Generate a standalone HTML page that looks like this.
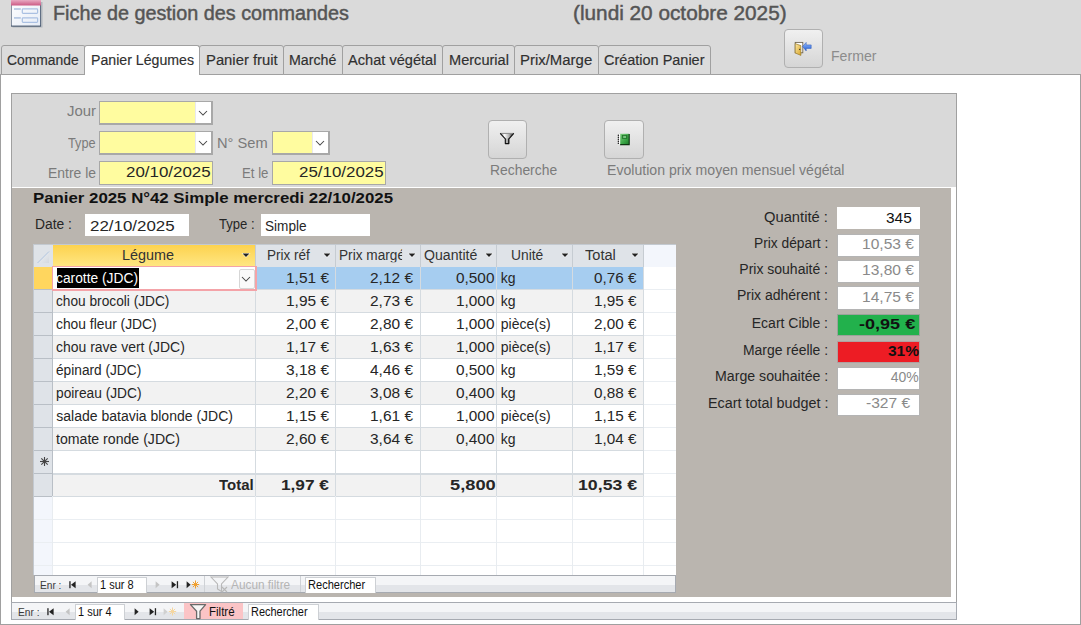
<!DOCTYPE html><html><head><meta charset="utf-8"><style>
html,body{margin:0;padding:0}
body{width:1081px;height:625px;position:relative;overflow:hidden;background:#dadada;font-family:"Liberation Sans",sans-serif}
div,span.t,svg{position:absolute}
span.t{white-space:pre}
</style></head><body>
<svg style="position:absolute;left:10px;top:0px" width="34" height="30" viewBox="0 0 34 30">
<defs><linearGradient id="pk" x1="0" y1="0" x2="0" y2="1"><stop offset="0" stop-color="#e8aac2"/><stop offset="1" stop-color="#cc5a84"/></linearGradient>
<linearGradient id="bd" x1="0" y1="0" x2="1" y2="1"><stop offset="0" stop-color="#ffffff"/><stop offset="1" stop-color="#e6ecf6"/></linearGradient></defs>
<rect x="2.5" y="2" width="30" height="25.5" fill="#8a94a0" opacity="0.5"/>
<rect x="1" y="0" width="30" height="26.6" fill="#3d4e66"/>
<rect x="1.6" y="0" width="28.6" height="25.6" fill="url(#bd)"/>
<rect x="1" y="0" width="30" height="5.5" fill="url(#pk)"/>
<rect x="4" y="8.1" width="6.8" height="1.8" fill="#b9cae4"/>
<rect x="12.3" y="8.9" width="15.3" height="4.5" rx="0.8" fill="none" stroke="#aac0e2" stroke-width="1.2"/>
<rect x="4" y="17" width="6.8" height="1.8" fill="#b9cae4"/>
<rect x="12.3" y="17.8" width="15.3" height="4.5" rx="0.8" fill="none" stroke="#aac0e2" stroke-width="1.2"/>
</svg>
<span class="t" style="left:53.30px;top:3.17px;font-size:20px;line-height:20px;transform:scaleX(0.9896);transform-origin:0 0;font-weight:normal;color:#555555;-webkit-text-stroke:0.45px #555;">Fiche de gestion des commandes</span>
<span class="t" style="left:572.90px;top:3.17px;font-size:20px;line-height:20px;transform:scaleX(1.0384);transform-origin:0 0;font-weight:normal;color:#555555;-webkit-text-stroke:0.45px #555;">(lundi 20 octobre 2025)</span>
<div style="left:0px;top:74px;width:1081px;height:551px;background:#fff;border:1px solid #a0a0a0;box-sizing:border-box"></div>
<div style="left:1px;top:45px;width:85px;height:30px;background:#dcdcdc;border:1px solid #a0a0a0;border-radius:3px 3px 0 0;box-sizing:border-box;z-index:1"></div>
<span class="t" style="left:6.70px;top:53.25px;font-size:14px;line-height:14px;transform:scaleX(0.9892);transform-origin:0 0;font-weight:normal;color:#303030;z-index:3;-webkit-text-stroke:0.15px #303030;">Commande</span>
<div style="left:84px;top:45px;width:116px;height:30px;background:#fff;border:1px solid #a0a0a0;border-bottom:none;border-radius:3px 3px 0 0;box-sizing:border-box;z-index:2"></div>
<span class="t" style="left:90.70px;top:53.25px;font-size:14px;line-height:14px;transform:scaleX(1.0099);transform-origin:0 0;font-weight:normal;color:#303030;z-index:3;-webkit-text-stroke:0.15px #303030;">Panier Légumes</span>
<div style="left:199px;top:45px;width:85px;height:30px;background:#dcdcdc;border:1px solid #a0a0a0;border-radius:3px 3px 0 0;box-sizing:border-box;z-index:1"></div>
<span class="t" style="left:206.00px;top:53.25px;font-size:14px;line-height:14px;transform:scaleX(1.0578);transform-origin:0 0;font-weight:normal;color:#303030;z-index:3;-webkit-text-stroke:0.15px #303030;">Panier fruit</span>
<div style="left:283px;top:45px;width:60px;height:30px;background:#dcdcdc;border:1px solid #a0a0a0;border-radius:3px 3px 0 0;box-sizing:border-box;z-index:1"></div>
<span class="t" style="left:289.30px;top:53.25px;font-size:14px;line-height:14px;transform:scaleX(1.0152);transform-origin:0 0;font-weight:normal;color:#303030;z-index:3;-webkit-text-stroke:0.15px #303030;">Marché</span>
<div style="left:342px;top:45px;width:101px;height:30px;background:#dcdcdc;border:1px solid #a0a0a0;border-radius:3px 3px 0 0;box-sizing:border-box;z-index:1"></div>
<span class="t" style="left:348.00px;top:53.25px;font-size:14px;line-height:14px;transform:scaleX(1.0431);transform-origin:0 0;font-weight:normal;color:#303030;z-index:3;-webkit-text-stroke:0.15px #303030;">Achat végétal</span>
<div style="left:442px;top:45px;width:73px;height:30px;background:#dcdcdc;border:1px solid #a0a0a0;border-radius:3px 3px 0 0;box-sizing:border-box;z-index:1"></div>
<span class="t" style="left:448.60px;top:53.25px;font-size:14px;line-height:14px;transform:scaleX(1.0410);transform-origin:0 0;font-weight:normal;color:#303030;z-index:3;-webkit-text-stroke:0.15px #303030;">Mercurial</span>
<div style="left:514px;top:45px;width:85px;height:30px;background:#dcdcdc;border:1px solid #a0a0a0;border-radius:3px 3px 0 0;box-sizing:border-box;z-index:1"></div>
<span class="t" style="left:520.20px;top:53.25px;font-size:14px;line-height:14px;transform:scaleX(1.0666);transform-origin:0 0;font-weight:normal;color:#303030;z-index:3;-webkit-text-stroke:0.15px #303030;">Prix/Marge</span>
<div style="left:598px;top:45px;width:113px;height:30px;background:#dcdcdc;border:1px solid #a0a0a0;border-radius:3px 3px 0 0;box-sizing:border-box;z-index:1"></div>
<span class="t" style="left:604.30px;top:53.25px;font-size:14px;line-height:14px;transform:scaleX(1.0329);transform-origin:0 0;font-weight:normal;color:#303030;z-index:3;-webkit-text-stroke:0.15px #303030;">Création Panier</span>
<div style="left:784px;top:29px;width:39px;height:39px;border:1px solid #b0b0b0;border-radius:4px;background:linear-gradient(#f0f0f0,#d5d5d5);box-sizing:border-box"></div>
<svg style="position:absolute;left:793px;top:40px" width="20" height="18" viewBox="0 0 20 18">
<defs><linearGradient id="dr" x1="0" y1="0" x2="1" y2="1"><stop offset="0" stop-color="#fde9a6"/><stop offset="1" stop-color="#d7a42a"/></linearGradient>
<linearGradient id="ar" x1="0" y1="0" x2="0" y2="1"><stop offset="0" stop-color="#9cc0ff"/><stop offset="1" stop-color="#1d5ad3"/></linearGradient></defs>
<rect x="2.2" y="2.4" width="7.6" height="10.4" fill="#fff" stroke="#6f6550" stroke-width="0.9"/>
<path d="M2.2 3.6 L7.9 5.6 L7.9 15.4 L2.2 13 Z" fill="url(#dr)" stroke="#8a6b1c" stroke-width="0.6"/>
<circle cx="6.7" cy="9.3" r="0.65" fill="#222"/>
<path d="M9.6 6.6 L13.2 2.4 L13.2 4.9 L18.2 4.9 L18.2 8.4 L13.2 8.4 L13.2 10.9 Z" fill="url(#ar)" stroke="#2856b8" stroke-width="0.5"/>
</svg>
<span class="t" style="left:831.30px;top:49.15px;font-size:14px;line-height:14px;transform:scaleX(1.0071);transform-origin:0 0;font-weight:normal;color:#8c8c8c;">Fermer</span>
<div style="left:11px;top:93px;width:946px;height:527px;border:1px solid #a0a0a0;border-bottom:none;background:#fff;box-sizing:border-box"></div>
<div style="left:12px;top:94px;width:944px;height:93px;background:#d9d9d9"></div>
<div style="left:12px;top:188px;width:939px;height:408.5px;background:#bab5af"></div>
<div style="left:99px;top:101px;width:114px;height:24px;background:#fffc9f;border:1px solid #a8a8a8;border-right-width:2px;border-bottom-width:2px;box-sizing:border-box"></div>
<div style="left:195px;top:102px;width:16px;height:21px;background:#fff;border-left:1px solid #e8e8f0;box-sizing:border-box"></div>
<svg style="position:absolute;left:198px;top:109.7px" width="10" height="6" viewBox="0 0 10 6"><path d="M1 1 L5 5 L9 1" fill="none" stroke="#444" stroke-width="1.05"/></svg>
<div style="left:99px;top:131px;width:114px;height:24px;background:#fffc9f;border:1px solid #a8a8a8;border-right-width:2px;border-bottom-width:2px;box-sizing:border-box"></div>
<div style="left:195px;top:132px;width:16px;height:21px;background:#fff;border-left:1px solid #e8e8f0;box-sizing:border-box"></div>
<svg style="position:absolute;left:198px;top:139.7px" width="10" height="6" viewBox="0 0 10 6"><path d="M1 1 L5 5 L9 1" fill="none" stroke="#444" stroke-width="1.05"/></svg>
<div style="left:272px;top:131px;width:58px;height:24px;background:#fffc9f;border:1px solid #a8a8a8;border-right-width:2px;border-bottom-width:2px;box-sizing:border-box"></div>
<div style="left:312px;top:132px;width:16px;height:21px;background:#fff;border-left:1px solid #e8e8f0;box-sizing:border-box"></div>
<svg style="position:absolute;left:315px;top:139.7px" width="10" height="6" viewBox="0 0 10 6"><path d="M1 1 L5 5 L9 1" fill="none" stroke="#444" stroke-width="1.05"/></svg>
<div style="left:99px;top:161px;width:114px;height:24px;background:#fffc9f;border:1px solid #a8a8a8;box-sizing:border-box"></div>
<div style="left:272px;top:161px;width:114px;height:24px;background:#fffc9f;border:1px solid #a8a8a8;box-sizing:border-box"></div>
<span class="t" style="left:66.90px;top:104.05px;font-size:14px;line-height:14px;transform:scaleX(1.0650);transform-origin:0 0;font-weight:normal;color:#7b7b7b;">Jour</span>
<span class="t" style="left:68.30px;top:135.85px;font-size:14px;line-height:14px;transform:scaleX(0.9085);transform-origin:0 0;font-weight:normal;color:#7b7b7b;">Type</span>
<span class="t" style="left:47.90px;top:165.85px;font-size:14px;line-height:14px;transform:scaleX(0.9952);transform-origin:0 0;font-weight:normal;color:#7b7b7b;">Entre le</span>
<span class="t" style="left:217.40px;top:135.85px;font-size:14px;line-height:14px;transform:scaleX(1.0461);transform-origin:0 0;font-weight:normal;color:#7b7b7b;">N° Sem</span>
<span class="t" style="left:241.60px;top:165.85px;font-size:14px;line-height:14px;transform:scaleX(0.9429);transform-origin:0 0;font-weight:normal;color:#7b7b7b;">Et le</span>
<span class="t" style="left:125.60px;top:165.15px;font-size:14px;line-height:14px;transform:scaleX(1.2074);transform-origin:0 0;font-weight:normal;color:#262626;">20/10/2025</span>
<span class="t" style="left:298.80px;top:165.15px;font-size:14px;line-height:14px;transform:scaleX(1.2074);transform-origin:0 0;font-weight:normal;color:#262626;">25/10/2025</span>
<div style="left:488px;top:120px;width:39px;height:39px;border:1px solid #b0b0b0;border-radius:4px;background:linear-gradient(#f0f0f0,#d5d5d5);box-sizing:border-box"></div>
<svg style="position:absolute;left:498px;top:131px" width="18" height="15" viewBox="0 0 18 15">
<defs><linearGradient id="fn" x1="0" y1="0" x2="1" y2="0"><stop offset="0" stop-color="#777"/><stop offset="0.3" stop-color="#fff"/><stop offset="0.65" stop-color="#b0b0b0"/><stop offset="1" stop-color="#222"/></linearGradient>
<linearGradient id="fs" x1="0" y1="0" x2="1" y2="0"><stop offset="0" stop-color="#555"/><stop offset="0.5" stop-color="#ddd"/><stop offset="1" stop-color="#000"/></linearGradient></defs>
<path d="M2.2 2.4 L15.8 2.4 L10.9 7.9 L7.3 7.9 Z" fill="url(#fn)"/>
<path d="M7.3 7.6 H10.9 V12.6 H7.3 Z" fill="url(#fs)"/>
<path d="M2.2 2.4 H15.8" stroke="#8a8a8a" stroke-width="1"/>
<path d="M2.2 2.4 L7.3 7.9 V12.6 H10.9 V7.9 L15.8 2.4" fill="none" stroke="#111" stroke-width="1.1" stroke-linejoin="round"/>
</svg>
<span class="t" style="left:489.50px;top:162.85px;font-size:14px;line-height:14px;transform:scaleX(0.9913);transform-origin:0 0;font-weight:normal;color:#7b7b7b;">Recherche</span>
<div style="left:604px;top:120px;width:40px;height:39px;border:1px solid #b0b0b0;border-radius:4px;background:linear-gradient(#f0f0f0,#d5d5d5);box-sizing:border-box"></div>
<svg style="position:absolute;left:616px;top:132px" width="15" height="14" viewBox="0 0 15 14">
<defs><linearGradient id="nb" x1="0" y1="0" x2="1" y2="1"><stop offset="0" stop-color="#7fd07f"/><stop offset="0.6" stop-color="#3aa545"/><stop offset="1" stop-color="#1c7a28"/></linearGradient></defs>
<rect x="3.6" y="1.8" width="9.6" height="10.8" fill="url(#nb)"/>
<path d="M13.2 2 V12.6 H4" fill="none" stroke="#0f3512" stroke-width="1.1"/>
<rect x="6.2" y="3.6" width="4.8" height="2.8" fill="#2a8f35" stroke="#1c6a24" stroke-width="0.6"/>
<rect x="7.2" y="4.5" width="2.8" height="1" fill="#c8f0c8"/>
<rect x="2.6" y="2" width="1.6" height="10.6" fill="#fff"/>
<g fill="#111"><circle cx="2.4" cy="3.2" r="0.75"/><circle cx="2.4" cy="5.2" r="0.75"/><circle cx="2.4" cy="7.2" r="0.75"/><circle cx="2.4" cy="9.2" r="0.75"/><circle cx="2.4" cy="11.2" r="0.75"/></g>
</svg>
<span class="t" style="left:606.50px;top:162.85px;font-size:14px;line-height:14px;transform:scaleX(1.0071);transform-origin:0 0;font-weight:normal;color:#7b7b7b;">Evolution prix moyen mensuel végétal</span>
<span class="t" style="left:33.00px;top:191.05px;font-size:14px;line-height:14px;transform:scaleX(1.2008);transform-origin:0 0;font-weight:bold;color:#111;">Panier 2025 N°42 Simple mercredi 22/10/2025</span>
<span class="t" style="left:34.90px;top:217.45px;font-size:14px;line-height:14px;transform:scaleX(0.9898);transform-origin:0 0;font-weight:normal;color:#262626;">Date :</span>
<div style="left:85px;top:214px;width:104px;height:22px;background:#fff"></div>
<span class="t" style="left:89.70px;top:218.85px;font-size:14px;line-height:14px;transform:scaleX(1.2088);transform-origin:0 0;font-weight:normal;color:#262626;">22/10/2025</span>
<span class="t" style="left:219.40px;top:217.45px;font-size:14px;line-height:14px;transform:scaleX(0.9332);transform-origin:0 0;font-weight:normal;color:#262626;">Type :</span>
<div style="left:261px;top:214px;width:109px;height:22px;background:#fff"></div>
<span class="t" style="left:265.00px;top:218.65px;font-size:14px;line-height:14px;transform:scaleX(0.9703);transform-origin:0 0;font-weight:normal;color:#262626;">Simple</span>
<div style="left:837px;top:207px;width:83px;height:22px;background:#fff;box-sizing:border-box"></div>
<span class="t" style="left:764.10px;top:209.95px;font-size:14px;line-height:14px;transform:scaleX(1.0529);transform-origin:0 0;font-weight:normal;color:#262626;">Quantité :</span>
<span class="t" style="left:885.50px;top:211.05px;font-size:14px;line-height:14px;transform:scaleX(1.1035);transform-origin:0 0;font-weight:normal;color:#111;">345</span>
<div style="left:837px;top:234px;width:83px;height:23px;background:#fff;border:1px solid #b4b4b4;box-sizing:border-box"></div>
<span class="t" style="left:753.80px;top:235.85px;font-size:14px;line-height:14px;transform:scaleX(0.9833);transform-origin:0 0;font-weight:normal;color:#262626;">Prix départ :</span>
<span class="t" style="left:861.70px;top:236.55px;font-size:14px;line-height:14px;transform:scaleX(1.1116);transform-origin:0 0;font-weight:normal;color:#8a8a8a;">10,53 €</span>
<div style="left:837px;top:260px;width:83px;height:23px;background:#fff;border:1px solid #b4b4b4;box-sizing:border-box"></div>
<span class="t" style="left:739.31px;top:261.85px;font-size:14px;line-height:14px;font-weight:normal;color:#262626;">Prix souhaité :</span>
<span class="t" style="left:861.70px;top:262.95px;font-size:14px;line-height:14px;transform:scaleX(1.1116);transform-origin:0 0;font-weight:normal;color:#8a8a8a;">13,80 €</span>
<div style="left:837px;top:286px;width:83px;height:24px;background:#fff;border:1px solid #b4b4b4;box-sizing:border-box"></div>
<span class="t" style="left:736.93px;top:287.85px;font-size:14px;line-height:14px;font-weight:normal;color:#262626;">Prix adhérent :</span>
<span class="t" style="left:861.70px;top:289.95px;font-size:14px;line-height:14px;transform:scaleX(1.1116);transform-origin:0 0;font-weight:normal;color:#8a8a8a;">14,75 €</span>
<div style="left:837px;top:314px;width:83px;height:22px;background:#22b14c;border:1px solid #9aa39a;box-sizing:border-box"></div>
<span class="t" style="left:751.77px;top:315.95px;font-size:14px;line-height:14px;font-weight:normal;color:#262626;">Ecart Cible :</span>
<span class="t" style="left:858.50px;top:316.75px;font-size:14px;line-height:14px;transform:scaleX(1.2887);transform-origin:0 0;font-weight:bold;color:#111;">-0,95 €</span>
<div style="left:837px;top:341px;width:83px;height:22px;background:#ed1c24;border:1px solid #b0a0a0;box-sizing:border-box"></div>
<span class="t" style="left:742.90px;top:343.15px;font-size:14px;line-height:14px;transform:scaleX(0.9940);transform-origin:0 0;font-weight:normal;color:#262626;">Marge réelle :</span>
<span class="t" style="left:888.00px;top:343.75px;font-size:14px;line-height:14px;transform:scaleX(1.1071);transform-origin:0 0;font-weight:bold;color:#111;">31%</span>
<div style="left:837px;top:367px;width:83px;height:23px;background:#fff;border:1px solid #b4b4b4;box-sizing:border-box"></div>
<span class="t" style="left:714.70px;top:368.75px;font-size:14px;line-height:14px;transform:scaleX(1.0110);transform-origin:0 0;font-weight:normal;color:#262626;">Marge souhaitée :</span>
<span class="t" style="left:890.80px;top:369.55px;font-size:14px;line-height:14px;font-weight:normal;color:#8a8a8a;">40%</span>
<div style="left:837px;top:394px;width:83px;height:22px;background:#fff;border:1px solid #b4b4b4;box-sizing:border-box"></div>
<span class="t" style="left:707.50px;top:395.95px;font-size:14px;line-height:14px;transform:scaleX(1.0253);transform-origin:0 0;font-weight:normal;color:#262626;">Ecart total budget :</span>
<span class="t" style="left:865.90px;top:396.25px;font-size:14px;line-height:14px;transform:scaleX(1.1136);transform-origin:0 0;font-weight:normal;color:#8a8a8a;">-327 €</span>
<div style="left:34px;top:245px;width:642px;height:330px;background:#fff"></div>
<div style="left:34px;top:245px;width:642px;height:22px;background:#f3f6fc"></div>
<div style="left:34px;top:245px;width:610px;height:22px;background:#dfe3e8"></div>
<div style="left:53px;top:245px;width:202px;height:22px;background:linear-gradient(#fdd24e,#ffe784)"></div>
<div style="left:34px;top:267px;width:19px;height:308px;background:#f3f6fc"></div>
<div style="left:53px;top:267px;width:591px;height:22px;background:#a6cdf0"></div>
<div style="left:34px;top:267px;width:18px;height:22px;background:#ffd65e"></div>
<div style="left:53px;top:289px;width:591px;height:1px;background:#d5dbe0"></div>
<div style="left:34px;top:289px;width:19px;height:1px;background:#b9bfc6"></div>
<div style="left:644px;top:289px;width:32px;height:1px;background:#eaeef2"></div>
<div style="left:53px;top:290px;width:591px;height:22px;background:#f2f2f2"></div>
<div style="left:34px;top:290px;width:18px;height:22px;background:#dfe3e8"></div>
<div style="left:53px;top:312px;width:591px;height:1px;background:#d5dbe0"></div>
<div style="left:34px;top:312px;width:19px;height:1px;background:#b9bfc6"></div>
<div style="left:644px;top:312px;width:32px;height:1px;background:#eaeef2"></div>
<div style="left:53px;top:313px;width:591px;height:22px;background:#ffffff"></div>
<div style="left:34px;top:313px;width:18px;height:22px;background:#dfe3e8"></div>
<div style="left:53px;top:335px;width:591px;height:1px;background:#d5dbe0"></div>
<div style="left:34px;top:335px;width:19px;height:1px;background:#b9bfc6"></div>
<div style="left:644px;top:335px;width:32px;height:1px;background:#eaeef2"></div>
<div style="left:53px;top:336px;width:591px;height:22px;background:#f2f2f2"></div>
<div style="left:34px;top:336px;width:18px;height:22px;background:#dfe3e8"></div>
<div style="left:53px;top:358px;width:591px;height:1px;background:#d5dbe0"></div>
<div style="left:34px;top:358px;width:19px;height:1px;background:#b9bfc6"></div>
<div style="left:644px;top:358px;width:32px;height:1px;background:#eaeef2"></div>
<div style="left:53px;top:359px;width:591px;height:22px;background:#ffffff"></div>
<div style="left:34px;top:359px;width:18px;height:22px;background:#dfe3e8"></div>
<div style="left:53px;top:381px;width:591px;height:1px;background:#d5dbe0"></div>
<div style="left:34px;top:381px;width:19px;height:1px;background:#b9bfc6"></div>
<div style="left:644px;top:381px;width:32px;height:1px;background:#eaeef2"></div>
<div style="left:53px;top:382px;width:591px;height:22px;background:#f2f2f2"></div>
<div style="left:34px;top:382px;width:18px;height:22px;background:#dfe3e8"></div>
<div style="left:53px;top:404px;width:591px;height:1px;background:#d5dbe0"></div>
<div style="left:34px;top:404px;width:19px;height:1px;background:#b9bfc6"></div>
<div style="left:644px;top:404px;width:32px;height:1px;background:#eaeef2"></div>
<div style="left:53px;top:405px;width:591px;height:22px;background:#ffffff"></div>
<div style="left:34px;top:405px;width:18px;height:22px;background:#dfe3e8"></div>
<div style="left:53px;top:427px;width:591px;height:1px;background:#d5dbe0"></div>
<div style="left:34px;top:427px;width:19px;height:1px;background:#b9bfc6"></div>
<div style="left:644px;top:427px;width:32px;height:1px;background:#eaeef2"></div>
<div style="left:53px;top:428px;width:591px;height:22px;background:#f2f2f2"></div>
<div style="left:34px;top:428px;width:18px;height:22px;background:#dfe3e8"></div>
<div style="left:53px;top:450px;width:591px;height:1px;background:#d5dbe0"></div>
<div style="left:34px;top:450px;width:19px;height:1px;background:#b9bfc6"></div>
<div style="left:644px;top:450px;width:32px;height:1px;background:#eaeef2"></div>
<div style="left:53px;top:451px;width:591px;height:22px;background:#ffffff"></div>
<div style="left:34px;top:451px;width:18px;height:22px;background:#dfe3e8"></div>
<div style="left:53px;top:473px;width:591px;height:1px;background:#d5dbe0"></div>
<div style="left:34px;top:473px;width:19px;height:1px;background:#b9bfc6"></div>
<div style="left:644px;top:473px;width:32px;height:1px;background:#eaeef2"></div>
<div style="left:53px;top:474px;width:591px;height:22px;background:#f2f2f2"></div>
<div style="left:34px;top:474px;width:18px;height:22px;background:#dfe3e8"></div>
<div style="left:53px;top:496px;width:591px;height:1px;background:#d5dbe0"></div>
<div style="left:34px;top:496px;width:19px;height:1px;background:#b9bfc6"></div>
<div style="left:644px;top:496px;width:32px;height:1px;background:#eaeef2"></div>
<div style="left:53px;top:474px;width:591px;height:1px;background:#d5dbe0"></div>
<div style="left:34px;top:519px;width:642px;height:1px;background:#eaeef2"></div>
<div style="left:34px;top:542px;width:642px;height:1px;background:#eaeef2"></div>
<div style="left:34px;top:565px;width:642px;height:1px;background:#eaeef2"></div>
<div style="left:52px;top:267px;width:1px;height:229px;background:#b9bfc6"></div>
<div style="left:52px;top:496px;width:1px;height:79px;background:#e8ecf0"></div>
<div style="left:255px;top:245px;width:1px;height:251px;background:#d5dbe0"></div>
<div style="left:255px;top:496px;width:1px;height:79px;background:#e8ecf0"></div>
<div style="left:335px;top:245px;width:1px;height:251px;background:#d5dbe0"></div>
<div style="left:335px;top:496px;width:1px;height:79px;background:#e8ecf0"></div>
<div style="left:420px;top:245px;width:1px;height:251px;background:#d5dbe0"></div>
<div style="left:420px;top:496px;width:1px;height:79px;background:#e8ecf0"></div>
<div style="left:496px;top:245px;width:1px;height:251px;background:#d5dbe0"></div>
<div style="left:496px;top:496px;width:1px;height:79px;background:#e8ecf0"></div>
<div style="left:572px;top:245px;width:1px;height:251px;background:#d5dbe0"></div>
<div style="left:572px;top:496px;width:1px;height:79px;background:#e8ecf0"></div>
<div style="left:643px;top:245px;width:1px;height:251px;background:#d5dbe0"></div>
<div style="left:643px;top:496px;width:1px;height:79px;background:#e8ecf0"></div>
<div style="left:255px;top:245px;width:1px;height:22px;background:#c6ccd2"></div>
<div style="left:335px;top:245px;width:1px;height:22px;background:#c6ccd2"></div>
<div style="left:420px;top:245px;width:1px;height:22px;background:#c6ccd2"></div>
<div style="left:496px;top:245px;width:1px;height:22px;background:#c6ccd2"></div>
<div style="left:572px;top:245px;width:1px;height:22px;background:#c6ccd2"></div>
<div style="left:643px;top:245px;width:1px;height:22px;background:#c6ccd2"></div>
<div style="left:52px;top:266px;width:205px;height:25px;background:#fff;border:1px solid #f4a3a8;border-right-width:2px;border-bottom-width:2px;box-sizing:border-box"></div>
<div style="left:57px;top:268px;width:82px;height:20px;background:#000"></div>
<div style="left:238.5px;top:268.5px;width:16px;height:20px;background:#fafafa;border:1px solid #d6d6d6;border-radius:2px;box-sizing:border-box"></div>
<svg style="position:absolute;left:241.3px;top:276px" width="10" height="6" viewBox="0 0 10 6"><path d="M1 1 L5 5 L9 1" fill="none" stroke="#444" stroke-width="1.05"/></svg>
<span class="t" style="left:121.60px;top:248.35px;font-size:14px;line-height:14px;transform:scaleX(1.0275);transform-origin:0 0;font-weight:normal;color:#333;">Légume</span>
<svg style="position:absolute;left:240.5px;top:251.5px" width="10" height="7" viewBox="0 0 10 7"><path d="M0.5 1 L9.5 1 L5 5.8 Z" fill="#fff" opacity="0.8"/><path d="M1.6 1.5 L8.4 1.5 L5 5 Z" fill="#222"/></svg>
<span class="t" style="left:266.50px;top:248.35px;font-size:14px;line-height:14px;transform:scaleX(0.9667);transform-origin:0 0;font-weight:normal;color:#333;">Prix réf</span>
<svg style="position:absolute;left:322.1px;top:251.5px" width="10" height="7" viewBox="0 0 10 7"><path d="M0.5 1 L9.5 1 L5 5.8 Z" fill="#fff" opacity="0.8"/><path d="M1.6 1.5 L8.4 1.5 L5 5 Z" fill="#222"/></svg>
<span class="t" style="left:339.40px;top:248.35px;font-size:14px;line-height:14px;transform:scaleX(0.9750);transform-origin:0 0;font-weight:normal;color:#333;clip-path:inset(0 3px 0 0);">Prix margé</span>
<svg style="position:absolute;left:407.2px;top:251.5px" width="10" height="7" viewBox="0 0 10 7"><path d="M0.5 1 L9.5 1 L5 5.8 Z" fill="#fff" opacity="0.8"/><path d="M1.6 1.5 L8.4 1.5 L5 5 Z" fill="#222"/></svg>
<span class="t" style="left:423.80px;top:248.35px;font-size:14px;line-height:14px;transform:scaleX(1.0072);transform-origin:0 0;font-weight:normal;color:#333;">Quantité</span>
<svg style="position:absolute;left:483.5px;top:251.5px" width="10" height="7" viewBox="0 0 10 7"><path d="M0.5 1 L9.5 1 L5 5.8 Z" fill="#fff" opacity="0.8"/><path d="M1.6 1.5 L8.4 1.5 L5 5 Z" fill="#222"/></svg>
<span class="t" style="left:511.10px;top:248.35px;font-size:14px;line-height:14px;transform:scaleX(0.9881);transform-origin:0 0;font-weight:normal;color:#333;">Unité</span>
<svg style="position:absolute;left:559.7px;top:251.5px" width="10" height="7" viewBox="0 0 10 7"><path d="M0.5 1 L9.5 1 L5 5.8 Z" fill="#fff" opacity="0.8"/><path d="M1.6 1.5 L8.4 1.5 L5 5 Z" fill="#222"/></svg>
<span class="t" style="left:585.20px;top:248.35px;font-size:14px;line-height:14px;transform:scaleX(1.0427);transform-origin:0 0;font-weight:normal;color:#333;">Total</span>
<svg style="position:absolute;left:630.1px;top:251.5px" width="10" height="7" viewBox="0 0 10 7"><path d="M0.5 1 L9.5 1 L5 5.8 Z" fill="#fff" opacity="0.8"/><path d="M1.6 1.5 L8.4 1.5 L5 5 Z" fill="#222"/></svg>
<svg style="position:absolute;left:37px;top:251px" width="13" height="13" viewBox="0 0 13 13"><defs><linearGradient id="sa" x1="0" y1="0" x2="1" y2="1"><stop offset="0" stop-color="#f4f6f9"/><stop offset="1" stop-color="#d3d8de"/></linearGradient></defs><path d="M0.5 12 L12 0.5 L12 12 Z" fill="url(#sa)"/><path d="M0.5 12 L12 0.5" stroke="#a9bfdc" stroke-width="0.9"/></svg>
<span class="t" style="left:56.30px;top:270.95px;font-size:14px;line-height:14px;transform:scaleX(0.9852);transform-origin:0 0;font-weight:normal;color:#fff;">carotte (JDC)</span>
<span class="t" style="left:285.70px;top:270.95px;font-size:14px;line-height:14px;transform:scaleX(1.1048);transform-origin:0 0;font-weight:normal;color:#262626;">1,51 €</span>
<span class="t" style="left:370.00px;top:270.95px;font-size:14px;line-height:14px;transform:scaleX(1.1048);transform-origin:0 0;font-weight:normal;color:#262626;">2,12 €</span>
<span class="t" style="left:455.50px;top:270.95px;font-size:14px;line-height:14px;transform:scaleX(1.0978);transform-origin:0 0;font-weight:normal;color:#262626;">0,500</span>
<span class="t" style="left:500.80px;top:270.95px;font-size:14px;line-height:14px;font-weight:normal;color:#262626;">kg</span>
<span class="t" style="left:593.70px;top:270.95px;font-size:14px;line-height:14px;transform:scaleX(1.0894);transform-origin:0 0;font-weight:normal;color:#262626;">0,76 €</span>
<span class="t" style="left:56.30px;top:293.95px;font-size:14px;line-height:14px;transform:scaleX(0.9783);transform-origin:0 0;font-weight:normal;color:#262626;">chou brocoli (JDC)</span>
<span class="t" style="left:285.70px;top:293.95px;font-size:14px;line-height:14px;transform:scaleX(1.1048);transform-origin:0 0;font-weight:normal;color:#262626;">1,95 €</span>
<span class="t" style="left:370.00px;top:293.95px;font-size:14px;line-height:14px;transform:scaleX(1.1048);transform-origin:0 0;font-weight:normal;color:#262626;">2,73 €</span>
<span class="t" style="left:455.50px;top:293.95px;font-size:14px;line-height:14px;transform:scaleX(1.0978);transform-origin:0 0;font-weight:normal;color:#262626;">1,000</span>
<span class="t" style="left:500.80px;top:293.95px;font-size:14px;line-height:14px;font-weight:normal;color:#262626;">kg</span>
<span class="t" style="left:593.70px;top:293.95px;font-size:14px;line-height:14px;transform:scaleX(1.0894);transform-origin:0 0;font-weight:normal;color:#262626;">1,95 €</span>
<span class="t" style="left:56.30px;top:316.95px;font-size:14px;line-height:14px;transform:scaleX(0.9880);transform-origin:0 0;font-weight:normal;color:#262626;">chou fleur (JDC)</span>
<span class="t" style="left:285.70px;top:316.95px;font-size:14px;line-height:14px;transform:scaleX(1.1048);transform-origin:0 0;font-weight:normal;color:#262626;">2,00 €</span>
<span class="t" style="left:370.00px;top:316.95px;font-size:14px;line-height:14px;transform:scaleX(1.1048);transform-origin:0 0;font-weight:normal;color:#262626;">2,80 €</span>
<span class="t" style="left:455.50px;top:316.95px;font-size:14px;line-height:14px;transform:scaleX(1.0978);transform-origin:0 0;font-weight:normal;color:#262626;">1,000</span>
<span class="t" style="left:500.80px;top:316.95px;font-size:14px;line-height:14px;font-weight:normal;color:#262626;">pièce(s)</span>
<span class="t" style="left:593.70px;top:316.95px;font-size:14px;line-height:14px;transform:scaleX(1.0894);transform-origin:0 0;font-weight:normal;color:#262626;">2,00 €</span>
<span class="t" style="left:56.30px;top:339.95px;font-size:14px;line-height:14px;transform:scaleX(0.9973);transform-origin:0 0;font-weight:normal;color:#262626;">chou rave vert (JDC)</span>
<span class="t" style="left:285.70px;top:339.95px;font-size:14px;line-height:14px;transform:scaleX(1.1048);transform-origin:0 0;font-weight:normal;color:#262626;">1,17 €</span>
<span class="t" style="left:370.00px;top:339.95px;font-size:14px;line-height:14px;transform:scaleX(1.1048);transform-origin:0 0;font-weight:normal;color:#262626;">1,63 €</span>
<span class="t" style="left:455.50px;top:339.95px;font-size:14px;line-height:14px;transform:scaleX(1.0978);transform-origin:0 0;font-weight:normal;color:#262626;">1,000</span>
<span class="t" style="left:500.80px;top:339.95px;font-size:14px;line-height:14px;font-weight:normal;color:#262626;">pièce(s)</span>
<span class="t" style="left:593.70px;top:339.95px;font-size:14px;line-height:14px;transform:scaleX(1.0894);transform-origin:0 0;font-weight:normal;color:#262626;">1,17 €</span>
<span class="t" style="left:56.30px;top:362.95px;font-size:14px;line-height:14px;transform:scaleX(0.9776);transform-origin:0 0;font-weight:normal;color:#262626;">épinard (JDC)</span>
<span class="t" style="left:285.70px;top:362.95px;font-size:14px;line-height:14px;transform:scaleX(1.1048);transform-origin:0 0;font-weight:normal;color:#262626;">3,18 €</span>
<span class="t" style="left:370.00px;top:362.95px;font-size:14px;line-height:14px;transform:scaleX(1.1048);transform-origin:0 0;font-weight:normal;color:#262626;">4,46 €</span>
<span class="t" style="left:455.50px;top:362.95px;font-size:14px;line-height:14px;transform:scaleX(1.0978);transform-origin:0 0;font-weight:normal;color:#262626;">0,500</span>
<span class="t" style="left:500.80px;top:362.95px;font-size:14px;line-height:14px;font-weight:normal;color:#262626;">kg</span>
<span class="t" style="left:593.70px;top:362.95px;font-size:14px;line-height:14px;transform:scaleX(1.0894);transform-origin:0 0;font-weight:normal;color:#262626;">1,59 €</span>
<span class="t" style="left:56.30px;top:385.95px;font-size:14px;line-height:14px;transform:scaleX(0.9811);transform-origin:0 0;font-weight:normal;color:#262626;">poireau (JDC)</span>
<span class="t" style="left:285.70px;top:385.95px;font-size:14px;line-height:14px;transform:scaleX(1.1048);transform-origin:0 0;font-weight:normal;color:#262626;">2,20 €</span>
<span class="t" style="left:370.00px;top:385.95px;font-size:14px;line-height:14px;transform:scaleX(1.1048);transform-origin:0 0;font-weight:normal;color:#262626;">3,08 €</span>
<span class="t" style="left:455.50px;top:385.95px;font-size:14px;line-height:14px;transform:scaleX(1.0978);transform-origin:0 0;font-weight:normal;color:#262626;">0,400</span>
<span class="t" style="left:500.80px;top:385.95px;font-size:14px;line-height:14px;font-weight:normal;color:#262626;">kg</span>
<span class="t" style="left:593.70px;top:385.95px;font-size:14px;line-height:14px;transform:scaleX(1.0894);transform-origin:0 0;font-weight:normal;color:#262626;">0,88 €</span>
<span class="t" style="left:56.30px;top:408.95px;font-size:14px;line-height:14px;font-weight:normal;color:#262626;">salade batavia blonde (JDC)</span>
<span class="t" style="left:285.70px;top:408.95px;font-size:14px;line-height:14px;transform:scaleX(1.1048);transform-origin:0 0;font-weight:normal;color:#262626;">1,15 €</span>
<span class="t" style="left:370.00px;top:408.95px;font-size:14px;line-height:14px;transform:scaleX(1.1048);transform-origin:0 0;font-weight:normal;color:#262626;">1,61 €</span>
<span class="t" style="left:455.50px;top:408.95px;font-size:14px;line-height:14px;transform:scaleX(1.0978);transform-origin:0 0;font-weight:normal;color:#262626;">1,000</span>
<span class="t" style="left:500.80px;top:408.95px;font-size:14px;line-height:14px;font-weight:normal;color:#262626;">pièce(s)</span>
<span class="t" style="left:593.70px;top:408.95px;font-size:14px;line-height:14px;transform:scaleX(1.0894);transform-origin:0 0;font-weight:normal;color:#262626;">1,15 €</span>
<span class="t" style="left:56.30px;top:431.95px;font-size:14px;line-height:14px;transform:scaleX(1.0088);transform-origin:0 0;font-weight:normal;color:#262626;">tomate ronde (JDC)</span>
<span class="t" style="left:285.70px;top:431.95px;font-size:14px;line-height:14px;transform:scaleX(1.1048);transform-origin:0 0;font-weight:normal;color:#262626;">2,60 €</span>
<span class="t" style="left:370.00px;top:431.95px;font-size:14px;line-height:14px;transform:scaleX(1.1048);transform-origin:0 0;font-weight:normal;color:#262626;">3,64 €</span>
<span class="t" style="left:455.50px;top:431.95px;font-size:14px;line-height:14px;transform:scaleX(1.0978);transform-origin:0 0;font-weight:normal;color:#262626;">0,400</span>
<span class="t" style="left:500.80px;top:431.95px;font-size:14px;line-height:14px;font-weight:normal;color:#262626;">kg</span>
<span class="t" style="left:593.70px;top:431.95px;font-size:14px;line-height:14px;transform:scaleX(1.0894);transform-origin:0 0;font-weight:normal;color:#262626;">1,04 €</span>
<svg style="position:absolute;left:38.5px;top:456px" width="11" height="11" viewBox="0 0 11 11"><g stroke="#444" stroke-width="1.1"><path d="M5.5 1 V10"/><path d="M1 5.5 H10"/><path d="M2.3 2.3 L8.7 8.7"/><path d="M2.3 8.7 L8.7 2.3"/></g></svg>
<span class="t" style="left:219.20px;top:477.65px;font-size:14px;line-height:14px;transform:scaleX(1.0676);transform-origin:0 0;font-weight:bold;color:#262626;">Total</span>
<span class="t" style="left:281.00px;top:477.65px;font-size:14px;line-height:14px;transform:scaleX(1.2307);transform-origin:0 0;font-weight:bold;color:#262626;">1,97 €</span>
<span class="t" style="left:449.50px;top:477.65px;font-size:14px;line-height:14px;transform:scaleX(1.3060);transform-origin:0 0;font-weight:bold;color:#262626;">5,800</span>
<span class="t" style="left:578.30px;top:477.65px;font-size:14px;line-height:14px;transform:scaleX(1.2658);transform-origin:0 0;font-weight:bold;color:#262626;">10,53 €</span>
<div style="left:33px;top:244px;width:643px;height:331px;border:1px solid #c3c9d0;border-right:none;border-bottom:none;box-sizing:border-box;background:transparent"></div>
<div style="left:34px;top:575px;width:642px;height:18px;border:1px solid #a6aab1;box-sizing:border-box;background:linear-gradient(#f4f5f7 0,#f4f5f7 55%,#e3e5e9 55%,#e3e5e9 100%)"></div>
<span class="t" style="left:39.80px;top:579.77px;font-size:11.5px;line-height:11.5px;transform:scaleX(0.8819);transform-origin:0 0;font-weight:normal;color:#3a3a3a;">Enr :</span>
<svg style="position:absolute;left:69px;top:579.5px" width="8" height="9" viewBox="0 0 8 9"><rect x="0.3" y="1.2" width="1.3" height="7" fill="#222"/><path d="M6.6 1.2 L2 4.7 L6.6 8.2 Z" fill="#222"/></svg>
<svg style="position:absolute;left:87px;top:579.5px" width="6" height="9" viewBox="0 0 6 9"><path d="M4.6 1.2 L0.6 4.7 L4.6 8.2 Z" fill="#c4c4c4"/></svg>
<div style="left:97px;top:577px;width:50px;height:16px;background:#fff;border:1px solid #cdd0d4;border-bottom:none;box-sizing:border-box"></div>
<span class="t" style="left:99.80px;top:578.84px;font-size:12px;line-height:12px;transform:scaleX(0.9165);transform-origin:0 0;font-weight:normal;color:#111;">1 sur 8</span>
<svg style="position:absolute;left:155px;top:579.5px" width="6" height="9" viewBox="0 0 6 9"><path d="M0.6 1.2 L4.6 4.7 L0.6 8.2 Z" fill="#c4c4c4"/></svg>
<svg style="position:absolute;left:171px;top:579.5px" width="8" height="9" viewBox="0 0 8 9"><path d="M0.6 1.2 L5.2 4.7 L0.6 8.2 Z" fill="#222"/><rect x="5.8" y="1.2" width="1.3" height="7" fill="#222"/></svg>
<svg style="position:absolute;left:185.5px;top:579.5px" width="14" height="9" viewBox="0 0 14 9"><path d="M0.6 1.2 L4.6 4.7 L0.6 8.2 Z" fill="#222"/><g stroke="#f0a030" stroke-width="1"><path d="M9.5 0.5 V8.5"/><path d="M5.8 4.5 H13.2"/><path d="M6.9 1.9 L12.1 7.1"/><path d="M6.9 7.1 L12.1 1.9"/></g></svg>
<div style="left:204px;top:576px;width:1px;height:16px;background:#cfd2d6"></div>
<svg style="position:absolute;left:210px;top:576px" width="20" height="17" viewBox="0 0 20 17"><path d="M1 1 H18 L11.5 8 V15.5 L7.5 13 V8 Z" fill="none" stroke="#b8b8b8" stroke-width="1.1"/><path d="M12 11 L17 16 M17 11 L12 16" stroke="#b8b8b8" stroke-width="1.1"/></svg>
<span class="t" style="left:231.40px;top:578.84px;font-size:12px;line-height:12px;transform:scaleX(0.9857);transform-origin:0 0;font-weight:normal;color:#b4b4b4;">Aucun filtre</span>
<div style="left:300px;top:576px;width:1px;height:16px;background:#cfd2d6"></div>
<div style="left:305px;top:577px;width:71px;height:16px;background:#fff;border:1px solid #cdd0d4;border-bottom:none;box-sizing:border-box"></div>
<span class="t" style="left:307.80px;top:578.84px;font-size:12px;line-height:12px;transform:scaleX(0.9220);transform-origin:0 0;font-weight:normal;color:#111;">Rechercher</span>
<div style="left:12px;top:596.5px;width:944px;height:6px;background:#fff"></div>
<div style="left:11px;top:602px;width:946px;height:18px;border:1px solid #a6aab1;box-sizing:border-box;background:linear-gradient(#f4f5f7 0,#f4f5f7 55%,#e3e5e9 55%,#e3e5e9 100%)"></div>
<span class="t" style="left:17.60px;top:606.77px;font-size:11.5px;line-height:11.5px;transform:scaleX(0.8860);transform-origin:0 0;font-weight:normal;color:#3a3a3a;">Enr :</span>
<svg style="position:absolute;left:47px;top:606.5px" width="8" height="9" viewBox="0 0 8 9"><rect x="0.3" y="1.2" width="1.3" height="7" fill="#222"/><path d="M6.6 1.2 L2 4.7 L6.6 8.2 Z" fill="#222"/></svg>
<svg style="position:absolute;left:65px;top:606.5px" width="6" height="9" viewBox="0 0 6 9"><path d="M4.6 1.2 L0.6 4.7 L4.6 8.2 Z" fill="#c4c4c4"/></svg>
<div style="left:75px;top:604px;width:50px;height:16px;background:#fff;border:1px solid #cdd0d4;border-bottom:none;box-sizing:border-box"></div>
<span class="t" style="left:77.50px;top:605.84px;font-size:12px;line-height:12px;transform:scaleX(0.9165);transform-origin:0 0;font-weight:normal;color:#111;">1 sur 4</span>
<svg style="position:absolute;left:133.5px;top:606.5px" width="6" height="9" viewBox="0 0 6 9"><path d="M0.6 1.2 L4.6 4.7 L0.6 8.2 Z" fill="#222"/></svg>
<svg style="position:absolute;left:149px;top:606.5px" width="8" height="9" viewBox="0 0 8 9"><path d="M0.6 1.2 L5.2 4.7 L0.6 8.2 Z" fill="#222"/><rect x="5.8" y="1.2" width="1.3" height="7" fill="#222"/></svg>
<svg style="position:absolute;left:163px;top:606.5px" width="14" height="9" viewBox="0 0 14 9"><path d="M0.6 1.2 L4.6 4.7 L0.6 8.2 Z" fill="#d0d0d0"/><g stroke="#f5d6a0" stroke-width="1"><path d="M9.5 0.5 V8.5"/><path d="M5.8 4.5 H13.2"/><path d="M6.9 1.9 L12.1 7.1"/><path d="M6.9 7.1 L12.1 1.9"/></g></svg>
<div style="left:184px;top:603px;width:59px;height:16px;background:#fbc4c6"></div>
<svg style="position:absolute;left:189px;top:603px" width="19" height="17" viewBox="0 0 19 17"><path d="M1.5 1.6 H16.6 L11 8.2 V15.6 L7.6 15.6 V8.2 Z" fill="#f7f7f7" stroke="#6a6a6a" stroke-width="1.3" stroke-linejoin="round"/></svg>
<span class="t" style="left:209.20px;top:605.64px;font-size:12px;line-height:12px;transform:scaleX(0.9610);transform-origin:0 0;font-weight:normal;color:#111;">Filtré</span>
<div style="left:248px;top:604px;width:71px;height:16px;background:#fff;border:1px solid #cdd0d4;border-bottom:none;box-sizing:border-box"></div>
<span class="t" style="left:251.40px;top:605.84px;font-size:12px;line-height:12px;transform:scaleX(0.9123);transform-origin:0 0;font-weight:normal;color:#111;">Rechercher</span>
</body></html>
